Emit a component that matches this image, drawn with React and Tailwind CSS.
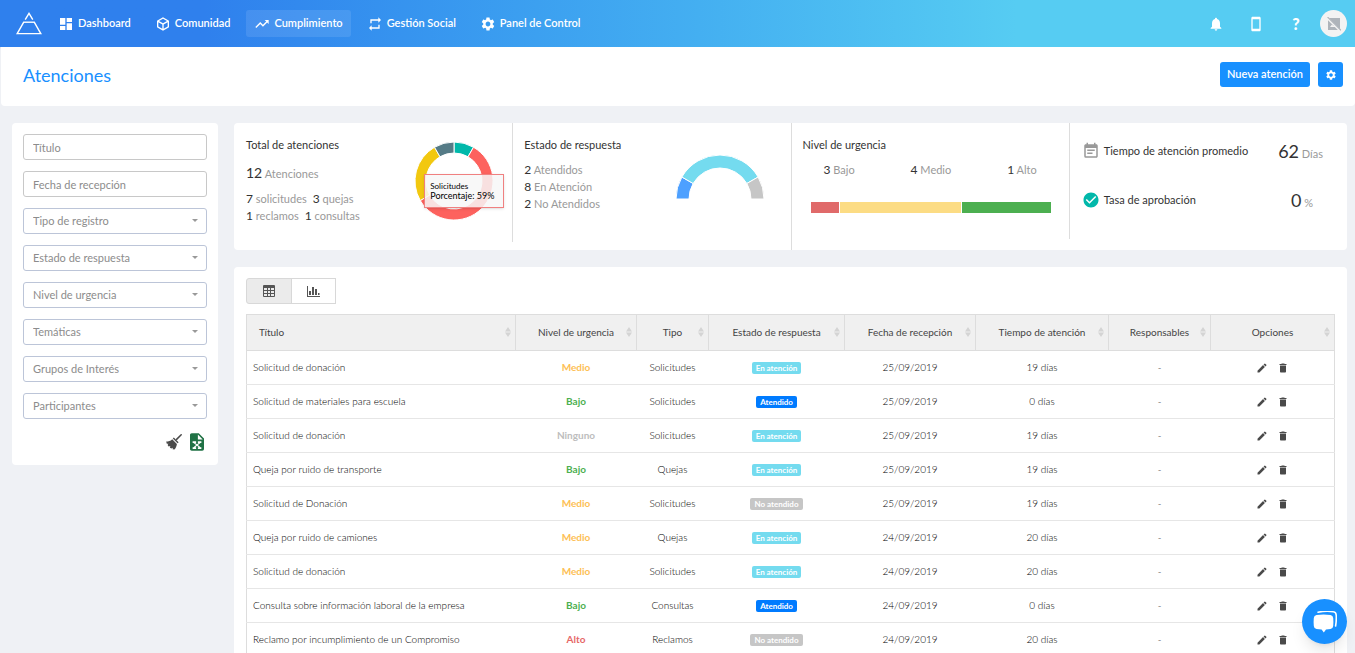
import React from "react";
import {
  MdDashboard,
  MdTrendingUp,
  MdRepeat,
  MdSettings,
  MdNotifications,
  MdStayCurrentPortrait,
  MdModeEdit,
  MdDelete,
  MdEventNote,
  MdCheckCircle,
} from "react-icons/md";

function CubeIcon({ className }) {
  return (
    <svg viewBox="0 0 24 24" className={className} fill="currentColor" aria-hidden="true">
      <path d="M21,16.5C21,16.88 20.79,17.21 20.47,17.38L12.57,21.82C12.41,21.94 12.21,22 12,22C11.79,22 11.59,21.94 11.43,21.82L3.53,17.38C3.21,17.21 3,16.88 3,16.5V7.5C3,7.12 3.21,6.79 3.53,6.62L11.43,2.18C11.59,2.06 11.79,2 12,2C12.21,2 12.41,2.06 12.57,2.18L20.47,6.62C20.79,6.79 21,7.12 21,7.5V16.5M12,4.15L6.04,7.5L12,10.85L17.96,7.5L12,4.15M5,15.91L11,19.29V12.58L5,9.21V15.91M19,15.91V9.21L13,12.58V19.29L19,15.91Z" />
    </svg>
  );
}

function ExcelIcon({ className }) {
  return (
    <svg viewBox="4 2 16 20" className={className} fill="currentColor" aria-hidden="true">
      <path d="M13,9H18.5L13,3.5V9M6,2H14L20,8V20A2,2 0 0,1 18,22H6C4.89,22 4,21.1 4,20V4C4,2.89 4.89,2 6,2M17,11H13V13H14L12,14.67L10,13H11V11H7V13H8L11,15.5L8,18H7V20H11V18H10L12,16.33L14,18H13V20H17V18H16L13,15.5L16,13H17V11Z" />
    </svg>
  );
}

function BroomIcon({ className }) {
  return (
    <svg viewBox="0 0 16 16" className={className} aria-hidden="true">
      <path d="M15.200 .8 10.600 5.400" stroke="currentColor" strokeWidth="1.500" strokeLinecap="round" />
      <path d="M7.800 3.400 12.600 8.200 11.600 9.200 6.800 4.400z" fill="currentColor" />
      <path d="M6.200 5.200 10.900 9.900C10.700 12 9.800 14 8.400 15.600L6.600 15.200 6.800 13.800 5.200 14.600 3.800 13.400 4.400 12 2.600 12.600 1.600 11 2.400 9.800.8 9.800.2 7.600C2.400 7.600 4.600 7 6.200 5.200z" fill="currentColor" />
    </svg>
  );
}

function Logo() {
  return (
    <svg viewBox="0 0 26 23" className="h-[23px] w-[26px]" fill="none" stroke="#fff" strokeWidth="1.4" aria-hidden="true">
      <path d="M9.2 7.6 L13 1.4 L16.8 7.6" />
      <path d="M7.6 10.2 H18.4" />
      <path d="M7.9 9.8 L1.2 21.6 H24.8 L18.1 9.8" />
    </svg>
  );
}

function GridIcon() {
  return (
    <svg viewBox="0 0 12 12" className="h-3 w-3" aria-hidden="true">
      <rect width="12" height="12" rx="1" fill="#555" />
      {[3, 6, 9].map((y) =>
        [1, 5, 8].map((x) => (
          <rect key={`${x}-${y}`} x={x} y={y} width={x === 5 ? 2 : 3} height="2" fill="#ebebeb" />
        ))
      )}
    </svg>
  );
}

function BarsIcon() {
  return (
    <svg viewBox="0 0 13 12" className="h-3 w-[13px]" fill="#555" aria-hidden="true">
      <path d="M0 1h1v10h12v1H0z" />
      <path d="M2 6h2v4H2zM5 2h2v8H5zM8 4h2v6H8zM11 8H12.500v2h-1.500z" />
    </svg>
  );
}

const ring = (cx, cy, outer, inner, from, to) => {
  const at = (r, deg) => {
    const a = ((deg - 90) * Math.PI) / 180;
    return `${(cx + r * Math.cos(a)).toFixed(2)} ${(cy + r * Math.sin(a)).toFixed(2)}`;
  };
  const large = to - from > 180 ? 1 : 0;
  return `M${at(outer, from)}A${outer} ${outer} 0 ${large} 1 ${at(outer, to)}L${at(inner, to)}A${inner} ${inner} 0 ${large} 0 ${at(inner, from)}Z`;
};

const typeSlices = [
  { from: 0, to: 30, color: "#01b8aa" },
  { from: 30, to: 240, color: "#fd625e" },
  { from: 240, to: 330, color: "#f2c80f" },
  { from: 330, to: 360, color: "#557b86" },
];

const answerSlices = [
  { from: -90, to: -60, color: "#4da0ff" },
  { from: -60, to: 60, color: "#74dbef" },
  { from: 60, to: 90, color: "#c6c6c6" },
];

const navItems = [
  { label: "Dashboard", icon: MdDashboard },
  { label: "Comunidad", icon: CubeIcon },
  { label: "Cumplimiento", icon: MdTrendingUp, active: true },
  { label: "Gestión Social", icon: MdRepeat },
  { label: "Panel de Control", icon: MdSettings },
];

const selects = [
  "Tipo de registro",
  "Estado de respuesta",
  "Nivel de urgencia",
  "Temáticas",
  "Grupos de Interés",
  "Participantes",
];

const columns = [
  { label: "Título", width: "w-[269px]" },
  { label: "Nivel de urgencia", width: "w-[121px]" },
  { label: "Tipo", width: "w-[72px]" },
  { label: "Estado de respuesta", width: "w-[136px]" },
  { label: "Fecha de recepción", width: "w-[131px]" },
  { label: "Tiempo de atención", width: "w-[133px]" },
  { label: "Responsables", width: "w-[102px]" },
  { label: "Opciones", width: "w-[124px]" },
];

const rows = [
  ["Solicitud de donación", "Medio", "Solicitudes", "En atención", "25/09/2019", "19 días"],
  ["Solicitud de materiales para escuela", "Bajo", "Solicitudes", "Atendido", "25/09/2019", "0 días"],
  ["Solicitud de donación", "Ninguno", "Solicitudes", "En atención", "25/09/2019", "19 días"],
  ["Queja por ruido de transporte", "Bajo", "Quejas", "En atención", "25/09/2019", "19 días"],
  ["Solicitud de Donación", "Medio", "Solicitudes", "No atendido", "25/09/2019", "19 días"],
  ["Queja por ruido de camiones", "Medio", "Quejas", "En atención", "24/09/2019", "20 días"],
  ["Solicitud de donación", "Medio", "Solicitudes", "En atención", "24/09/2019", "20 días"],
  ["Consulta sobre información laboral de la empresa", "Bajo", "Consultas", "Atendido", "24/09/2019", "0 días"],
  ["Reclamo por incumplimiento de un Compromiso", "Alto", "Reclamos", "No atendido", "24/09/2019", "20 días"],
];

const levelColor = {
  Medio: "text-[#fdc055]",
  Bajo: "text-[#4caf50]",
  Ninguno: "text-[#bdbdbd]",
  Alto: "text-[#e66767]",
};

const stateColor = {
  "En atención": "bg-[#74dbef]",
  Atendido: "bg-[#007bff]",
  "No atendido": "bg-[#c6c6c6]",
};

function Count({ n, children }) {
  return (
    <span className="text-[#999]">
      <span className="text-xs text-[#333]">{n}</span> {children}
    </span>
  );
}

function Header() {
  return (
    <header className="flex h-[47px] items-center bg-linear-to-r from-[#2f80ed] from-15% to-[#56ccf2] to-75% pr-2 pl-4 text-white shadow-sm">
      <a href="#inicio" aria-label="Inicio">
        <Logo />
      </a>
      <nav className="ml-2 flex flex-1 items-center gap-2">
        {navItems.map(({ label, icon: Icon, active }) => (
          <a
            key={label}
            href={`#${label}`}
            className={`flex h-[27px] items-center gap-1 rounded-[3px] px-2 text-[11px] font-semibold whitespace-nowrap ${active ? "bg-white/10" : ""}`}
          >
            <Icon className="h-4 w-4 shrink-0" />
            {label}
          </a>
        ))}
      </nav>
      <div className="flex items-center">
        <button type="button" aria-label="Notificaciones" className="flex w-10 justify-center">
          <MdNotifications className="h-4 w-4" />
        </button>
        <button type="button" aria-label="Móvil" className="flex w-10 justify-center">
          <MdStayCurrentPortrait className="h-4 w-4" />
        </button>
        <button type="button" aria-label="Ayuda" className="flex w-10 justify-center text-base font-black">
          ?
        </button>
        <button type="button" aria-label="Perfil" className="ml-1 flex h-[27px] w-[27px] items-center justify-center rounded-full bg-[#f3f3f3]">
          <svg viewBox="0 0 14 14" className="h-3.5 w-3.5" aria-hidden="true">
            <path d="M1 1h12v12H1z" fill="#aeb4ba" />
            <path d="M3 10h7l-2-2.6-1.6 1.5L5 7.600z" fill="#f3f3f3" />
            <path d="M0 .6 13.200 13.800" stroke="#f3f3f3" strokeWidth="2.200" />
            <path d="M.6 0 14 13.400" stroke="#aeb4ba" strokeWidth="1.100" />
          </svg>
        </button>
      </div>
    </header>
  );
}

function Filters() {
  return (
    <form className="w-[206px] shrink-0 rounded-sm bg-white px-[11px] pt-[11px] pb-3.5">
      <div className="flex flex-col gap-[11px]">
        {["Título", "Fecha de recepción"].map((label) => (
          <input
            key={label}
            type="text"
            aria-label={label}
            placeholder={label}
            className="h-[26px] w-full rounded-[3px] border border-[#c8c8c8] px-[9px] text-[11px] text-[#555] placeholder:text-[#8c8c8c]"
          />
        ))}
        {selects.map((label) => (
          <div key={label} className="relative">
            <select
              aria-label={label}
              className="block h-[26px] w-full appearance-none rounded-[3px] border border-[#bcc5d8] bg-white px-[9px] text-[11px] text-[#8c8c8c]"
            >
              <option>{label}</option>
            </select>
            <svg viewBox="0 0 6 3" className="pointer-events-none absolute top-[11px] right-[9px] h-[3px] w-1.5" fill="#999" aria-hidden="true">
              <path d="M0 0h6L3 3z" />
            </svg>
          </div>
        ))}
      </div>
      <div className="mt-3.5 flex items-center justify-end gap-2 pr-[3px]">
        <button type="button" aria-label="Limpiar filtros">
          <BroomIcon className="h-4 w-4 text-[#4a4a4a]" />
        </button>
        <button type="button" aria-label="Exportar a Excel">
          <ExcelIcon className="h-[18px] w-[14px] text-[#207245]" />
        </button>
      </div>
    </form>
  );
}

function Stats() {
  return (
    <section className="grid grid-cols-4 items-start rounded-sm bg-white text-[11px]">
      <div className="flex justify-between pt-3.5 pr-[18px] pl-3">
        <div>
          <h2 className="leading-4 text-[#333]">Total de atenciones</h2>
          <p className="mt-3 leading-4 text-[#999]">
            <span className="text-sm leading-4 text-[#333]">12</span> Atenciones
          </p>
          <p className="mt-2 flex gap-1.5 leading-[17px]">
            <Count n="7">solicitudes</Count>
            <Count n="3">quejas</Count>
          </p>
          <p className="flex gap-1.5 leading-[17px]">
            <Count n="1">reclamos</Count>
            <Count n="1">consultas</Count>
          </p>
        </div>
        <div className="relative mt-1 h-20 w-20">
          <svg viewBox="0 0 80 80" className="h-20 w-20" role="img" aria-label="Atenciones por tipo">
            {typeSlices.map((s) => (
              <path key={s.from} d={ring(40, 40, 39, 28, s.from, s.to)} fill={s.color} stroke="#fff" strokeWidth="1" />
            ))}
          </svg>
          <div className="absolute top-[33px] left-2.5 w-20 border border-[#f08080] bg-[#f7f7f7]/85 py-1.5 pl-[5px] text-[9px] leading-[10px] whitespace-nowrap text-black shadow">
            <div className="text-[8px]">Solicitudes</div>
            <div>Porcentaje: 59%</div>
          </div>
        </div>
      </div>
      <div className="flex min-h-[119px] justify-between border-l border-[#ddd] pt-3.5 pr-[27px] pl-[11px]">
        <div>
          <h2 className="leading-4 text-[#333]">Estado de respuesta</h2>
          <ul className="mt-2 leading-[17px]">
            <li><Count n="2">Atendidos</Count></li>
            <li><Count n="8">En Atención</Count></li>
            <li><Count n="2">No Atendidos</Count></li>
          </ul>
        </div>
        <svg viewBox="0 0 88 46" className="mt-[17px] h-[46px] w-[88px]" role="img" aria-label="Atenciones por estado">
          {answerSlices.map((s) => (
            <path key={s.from} d={ring(44, 45, 44, 31, s.from, s.to)} fill={s.color} stroke="#fff" strokeWidth="1" />
          ))}
        </svg>
      </div>
      <div className="min-h-[127px] border-l border-[#ddd] pt-3.5 pr-[18px] pl-[11px]">
        <h2 className="leading-4 text-[#333]">Nivel de urgencia</h2>
        <div className="mt-2 flex justify-between pr-3.5 pl-[21px] leading-[17px]">
          <Count n="3">Bajo</Count>
          <Count n="4">Medio</Count>
          <Count n="1">Alto</Count>
        </div>
        <div className="mt-6 ml-2 flex h-[11px] gap-px" role="img" aria-label="Atenciones por nivel de urgencia">
          <div className="basis-[12%] bg-[#e06a6a]" />
          <div className="flex-1 bg-[#fcdc84]" />
          <div className="basis-[37%] bg-[#4caf50]" />
        </div>
      </div>
      <div className="flex min-h-[116px] flex-col border-l border-[#ddd] pt-4 pr-6 pl-3 text-[#333]">
        <div className="flex h-6 items-center">
          <MdEventNote className="h-[18px] w-[18px] text-[#999]" />
          <h2 className="ml-1 flex-1">Tiempo de atención promedio</h2>
          <p><span className="text-lg leading-6">62</span> <span className="text-[#999]">Días</span></p>
        </div>
        <div className="mt-[25px] flex h-6 items-center pr-2.5">
          <MdCheckCircle className="h-[18px] w-[18px] text-[#01b8aa]" />
          <h2 className="ml-1 flex-1">Tasa de aprobación</h2>
          <p><span className="text-lg leading-6">0</span> <span className="text-[#999]">%</span></p>
        </div>
      </div>
    </section>
  );
}

function Requests() {
  return (
    <section className="rounded-sm bg-white px-3 pt-[11px] pb-4">
      <div className="mb-2.5 flex">
        <button type="button" aria-label="Ver tabla" className="flex h-[26px] w-[46px] items-center justify-center rounded-l-[3px] border border-[#d8d8d8] bg-[#ebebeb]">
          <GridIcon />
        </button>
        <button type="button" aria-label="Ver gráfico" className="-ml-px flex h-[26px] w-[45px] items-center justify-center border border-[#d8d8d8] bg-white">
          <BarsIcon />
        </button>
      </div>
      <table className="w-full table-fixed border-collapse border border-[#ddd] text-[10px] font-light text-black">
        <thead>
          <tr className="h-9 bg-[#f0f0f0]">
            {columns.map(({ label, width }, i) => (
              <th key={label} className={`relative border border-[#ddd] p-0 font-normal text-[#444] ${width} ${i === 0 ? "pl-3 text-left" : "text-center"}`}>
                {label}
                <svg viewBox="0 0 6 10" className="absolute top-3 right-1 h-2.5 w-1.5" fill="#d4d4d4" aria-hidden="true">
                  <path d="M0 4.500 3 0l3 4.500zM0 5.500h6L3 10z" />
                </svg>
              </th>
            ))}
          </tr>
        </thead>
        <tbody>
          {rows.map(([title, level, type, state, date, time], i) => (
            <tr key={i} className="h-[34px] border-b border-[#e6e6e6] text-center">
              <td className="pl-1.5 text-left">{title}</td>
              <td className={`font-bold ${levelColor[level]}`}>{level}</td>
              <td>{type}</td>
              <td>
                <span className={`inline-block rounded-[2px] px-1 text-[8px] leading-3 font-bold text-white ${stateColor[state]}`}>{state}</span>
              </td>
              <td>{date}</td>
              <td>{time}</td>
              <td>-</td>
              <td>
                <div className="flex justify-center gap-[9px] text-[#4a4a4a]">
                  <button type="button" aria-label={`Editar ${title}`}><MdModeEdit className="h-3 w-3" /></button>
                  <button type="button" aria-label={`Eliminar ${title}`}><MdDelete className="h-3 w-3" /></button>
                </div>
              </td>
            </tr>
          ))}
        </tbody>
      </table>
    </section>
  );
}

export default function App() {
  return (
    <div className="h-screen overflow-hidden bg-[#eff1f5] font-['Lato',sans-serif]">
      <Header />
      <div className="ml-px flex h-[59px] items-center justify-between rounded-b-sm bg-white pr-3 pb-1 pl-[22px]">
        <h1 className="text-lg text-[#1890ff]">Atenciones</h1>
        <div className="flex gap-2">
          <button type="button" className="h-[25px] rounded-[3px] bg-[#1890ff] px-[7px] text-[11px] font-semibold text-white">
            Nueva atención
          </button>
          <button type="button" aria-label="Configuración" className="flex h-[25px] w-[25px] items-center justify-center rounded-[3px] bg-[#1890ff] text-white">
            <MdSettings className="h-3 w-3" />
          </button>
        </div>
      </div>
      <main className="flex items-start gap-4 pt-[17px] pr-2 pl-3">
        <Filters />
        <div className="flex min-w-0 flex-1 flex-col gap-[17px]">
          <Stats />
          <Requests />
        </div>
      </main>
      <button type="button" aria-label="Abrir chat" className="fixed right-2 bottom-[9px] flex h-[45px] w-[45px] items-center justify-center rounded-full bg-[#1890ff] shadow-lg">
        <svg viewBox="0 0 24 22" className="h-[22px] w-6" aria-hidden="true">
          <path d="M5 1.200Q14 -.6 20.500 .8Q23 1.200 23.200 4Q23.600 9 22.600 15" fill="none" stroke="#fff" strokeWidth="1.600" strokeLinecap="round" />
          <path d="M3.500 4Q10.500 3 17.500 4Q20 4.400 20.200 7Q20.600 11 20.200 15Q20 17.600 17.500 18L13 18.400L10.800 21.600L8.600 18.400L3.500 18Q1 17.600 .8 15Q.4 11 .8 7Q1 4.400 3.500 4Z" fill="#fff" />
        </svg>
      </button>
    </div>
  );
}
